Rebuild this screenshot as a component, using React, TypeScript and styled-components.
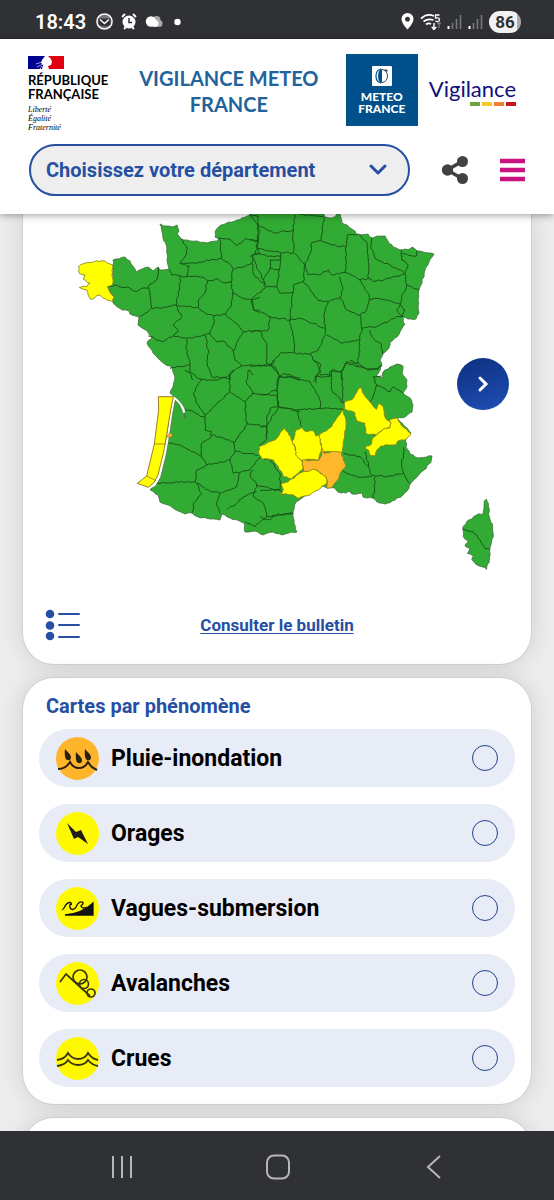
import React from "react";
import styled, { createGlobalStyle } from "styled-components";

const GlobalStyle = createGlobalStyle`
  * { box-sizing: border-box; }
  body { margin: 0; background: #ededed; font-family: Roboto, "Liberation Sans", sans-serif; }
  button, select, input { font: inherit; margin: 0; }
  button { border: 0; padding: 0; background: none; cursor: pointer; }
  svg { display: block; }
`;

const Screen = styled.div`
  display: flex;
  flex-direction: column;
  height: 100vh;
  overflow: hidden;
`;

const StatusBar = styled.div`
  display: flex;
  align-items: center;
  justify-content: space-between;
  flex: none;
  height: 39px;
  padding: 4px 33px 0 35px;
  background: #303135;
  color: #fff;
`;

const StatusGroup = styled.div<{ $gap: number }>`
  display: flex;
  align-items: center;
  gap: ${(p) => p.$gap}px;
`;

const Clock = styled.span`
  font-size: 20px;
  line-height: 24px;
  font-weight: 600;
  margin-right: 2px;
`;

const Battery = styled.span`
  width: 32px;
  height: 22px;
  border-radius: 11px;
  background: linear-gradient(90deg, #f2f2f2 86%, #a9a9ac 86%);
  color: #303135;
  font-size: 17px;
  line-height: 22px;
  font-weight: 700;
  text-align: center;
`;

const Header = styled.header`
  position: relative;
  z-index: 1;
  flex: none;
  height: 175px;
  padding: 15px 28px 0 28px;
  background: #fff;
  box-shadow: 0 1px 8px rgba(0, 0, 0, 0.4);
`;

const BrandRow = styled.div`
  display: flex;
  justify-content: space-between;
  align-items: flex-start;
  height: 90px;
  padding-right: 10px;
`;

const Republic = styled.a`
  display: flex;
  flex-direction: column;
  width: 84px;
  padding-top: 2px;
  color: #000;
  text-decoration: none;
`;

const RepublicName = styled.span`
  margin-top: 4px;
  font-family: Lato, sans-serif;
  font-weight: 700;
  font-size: 13px;
  line-height: 14px;
`;

const Motto = styled.span`
  margin-top: 4px;
  font-family: "Liberation Serif", serif;
  font-style: italic;
  font-size: 8px;
  line-height: 9px;
`;

const Title = styled.h1`
  width: 190px;
  margin: 11px 0 0;
  color: #21639a;
  font-family: Lato, sans-serif;
  font-size: 20px;
  line-height: 26px;
  font-weight: 700;
  text-align: center;
`;

const LogoPair = styled.div`
  display: flex;
  gap: 11px;
`;

const MeteoLogo = styled.a`
  display: flex;
  flex-direction: column;
  align-items: center;
  width: 72px;
  height: 72px;
  padding-top: 12px;
  background: #00508c;
  color: #fff;
  font-family: Lato, sans-serif;
  font-size: 12px;
  line-height: 12px;
  font-weight: 900;
  text-align: center;
  text-decoration: none;
`;

const MeteoName = styled.span`
  margin-top: 5px;
`;

const VigilanceLogo = styled.a`
  display: flex;
  flex-direction: column;
  align-items: flex-end;
  padding-top: 22px;
  color: #10107c;
  font-family: Lato, sans-serif;
  font-size: 22px;
  line-height: 26px;
  text-decoration: none;
`;

const LevelBar = styled.span`
  display: grid;
  grid-template-columns: repeat(4, 10px);
  gap: 2px;
`;

const Level = styled.i<{ $color: string }>`
  height: 4px;
  background: ${(p) => p.$color};
`;

const ToolRow = styled.div`
  display: flex;
  align-items: center;
`;

const SelectBox = styled.label`
  display: grid;
  flex: 1;
  align-items: center;
  margin: 0 30px 0 1px;
  > * { grid-area: 1 / 1; }
  svg { justify-self: end; margin-right: 22px; pointer-events: none; }
`;

const Select = styled.select`
  appearance: none;
  width: 100%;
  height: 52px;
  padding: 0 48px 0 15px;
  border: 2px solid #264fa3;
  border-radius: 26px;
  background: #eee;
  color: #264fa3;
  font-size: 20px;
  font-weight: 700;
`;

const IconButton = styled.button<{ $gap?: number }>`
  display: flex;
  margin-left: ${(p) => p.$gap ?? 0}px;
`;

const Main = styled.main`
  display: flex;
  flex-direction: column;
  gap: 12px;
  flex: 1 1 0;
  min-height: 0;
  padding: 0 22px;
  overflow: hidden;
`;

const Card = styled.section<{ $cut?: boolean }>`
  position: relative;
  flex: none;
  border: 1px solid #d0d0d0;
  border-radius: ${(p) => (p.$cut ? "0 0 32px 32px" : "32px")};
  border-top-width: ${(p) => (p.$cut ? 0 : 1)}px;
  background: #fff;
  box-shadow: 0 0 24px rgba(0, 0, 0, 0.12);
`;

const NextMap = styled.button`
  position: absolute;
  right: 22px;
  top: 144px;
  display: flex;
  align-items: center;
  justify-content: center;
  width: 52px;
  height: 52px;
  border-radius: 50%;
  background: linear-gradient(160deg, #0d2f80, #1f4fb5);
`;

const BulletinRow = styled.div`
  display: grid;
  grid-template-columns: 1fr auto 1fr;
  align-items: center;
  height: 79px;
  padding: 0 22px;
`;

const BulletinLink = styled.a`
  color: #264fa3;
  font-size: 17px;
  line-height: 24px;
  font-weight: 700;
  text-underline-offset: 2px;
`;

const CardTitle = styled.h2`
  margin: 0;
  padding: 16px 23px 11px;
  color: #264fa3;
  font-size: 20px;
  line-height: 24px;
  font-weight: 700;
`;

const PhenomenonList = styled.div`
  display: flex;
  flex-direction: column;
  gap: 17px;
  padding: 0 16px 17px;
`;

const PhenomenonRow = styled.label`
  display: flex;
  align-items: center;
  gap: 12px;
  height: 58px;
  padding: 0 17px;
  border-radius: 29px;
  background: #e8ecf7;
  color: #000;
  font-size: 23px;
  font-weight: 700;
  cursor: pointer;
`;

const Radio = styled.input`
  appearance: none;
  width: 26px;
  height: 26px;
  margin-left: auto !important;
  border: 1px solid #24418f;
  border-radius: 50%;
  &:checked { background: #264fa3; }
`;

const EmptyCard = styled(Card)`
  height: 80px;
`;

const NavBar = styled.nav`
  display: grid;
  grid-template-columns: repeat(3, 1fr);
  align-items: center;
  justify-items: center;
  flex: none;
  height: 69px;
  padding: 2px 42px 0 44px;
  background: #303135;
`;

/* ---------- map of the departments ---------- */

type Pt = [number, number];

const parse = (s: string): Pt[] =>
  s.trim().split(/\s+/).map((p) => p.split(",").map(Number) as Pt);

// Breaks every long segment into short, slightly irregular steps, as a natural border has.
function rough(source: string, step: number, amount: number, closed = false) {
  const pts = parse(source);
  if (closed) pts.push(pts[0]);
  let d = `M${pts[0][0]} ${pts[0][1]}`;
  for (let i = 1; i < pts.length; i++) {
    const [ax, ay] = pts[i - 1];
    const [bx, by] = pts[i];
    const len = Math.hypot(bx - ax, by - ay) || 1;
    const n = Math.max(1, Math.round(len / step));
    for (let k = 1; k <= n; k++) {
      const t = k / n;
      const seed = Math.sin((ax + by) * 12.9 + k * 78.2 + (bx - ay) * 3.1) * 43758.5;
      const off = k === n ? 0 : (seed - Math.floor(seed) - 0.5) * 2 * amount;
      const x = ax + (bx - ax) * t - ((by - ay) / len) * off;
      const y = ay + (by - ay) * t + ((bx - ax) / len) * off;
      d += `L${x.toFixed(1)} ${y.toFixed(1)}`;
    }
  }
  return closed ? d + "Z" : d;
}

const mainland = `160,224 164,226 172,227 177,225 179,231 177,234 181,239 187,240 197,241 207,243 217,241 219,239
215,237 215,232 221,225 237,220 250,215 252,208 323,208 325,217 332,218 340,213 342,223 347,225 355,231 358,235
368,234 372,238 377,236 385,236 388,241 393,247 402,250 410,249 412,247 417,251 423,252 434,254 429,262 425,270
422,283 419,290 418,300 419,313 416,319 408,319 403,317 403,322 405,324 400,332 397,337 390,342 389,348 383,354
380,360 382,365 379,372 376,376 383,378 383,372 390,367 397,364 403,366 402,373 407,380 407,387 403,393 410,398
413,405 412,412 405,417 397,418 402,423 407,428 411,433 406,438 406,447 410,454 418,458 432,456 431,462 424,470
417,477 411,483 409,488 403,495 395,500 385,504 377,502 373,498 363,497 362,493 352,494 349,491 346,493 338,492
335,488 328,488 323,486 310,494 302,498 296,502 293,512 294,523 297,532 292,532 282,535 273,532 263,535 255,531
245,532 244,523 230,518 222,514 220,520 210,519 198,517 192,513 185,514 173,508 160,502 158,495 150,490 157,483
162,472 165,453 167,433 172,405 175,400 180,405 184,413 185,418 185,409 180,402 175,397 170,393 173,387 175,378
173,372 172,368 162,362 153,353 147,343 152,337 146,330 138,325 139,317 130,314 129,311 122,310 113,303 114,297
108,287 112,285 113,265 113,260 125,257 130,261 136,272 142,269 148,267 153,271 158,267 160,270 169,269 167,260
167,248 163,238 162,232`;

const northWest = `332,86 352,115 348,135 330,160 358,168 350,200
330,160 380,160 410,150 440,150 455,145 450,90 446,84
446,84 480,88 500,108 530,86 565,92
455,145 475,158 490,180 545,160 550,135 570,130
540,14 565,50 565,92 558,110 570,130
545,160 555,200 590,225
298,178 305,195 332,198 350,200 400,202 412,212 445,207 460,218 485,215 488,180
332,198 328,240 318,285
412,212 405,250 385,270 385,292
318,285 350,290 385,292 400,305 432,318 465,312 485,285 488,250 482,215
488,250 520,265 545,270 570,262
545,270 550,300 570,310
265,172 262,205 235,230 242,270 245,295 210,320
112,230 135,225 180,235 200,245 215,235 235,235
245,295 290,292 318,285 335,320 310,345 325,360 310,378 275,395 235,378
310,378 350,385 405,375 420,370 432,340 432,318
465,312 500,340 520,365 500,400 490,425 465,395 440,395 418,370
520,365 570,362
490,425 495,450 515,468 570,465
350,385 350,430 360,465 300,475
405,375 415,420 412,460 425,500 480,505
360,465 360,490 370,510
515,468 480,490 480,510`;

const northEast = `0,12 25,20 25,45 70,68 130,60 135,15
25,45 22,115 15,130 0,140
0,90 22,95
135,10 180,16 222,18
22,115 70,125 130,130 130,60
15,130 60,138 92,140 92,130
5,140 40,210 60,175 60,150 92,148
60,175 88,180 92,140
40,210 45,232 80,230 88,180
80,230 90,250 130,248 130,225 160,215 165,165 135,130
222,22 212,92 185,98 180,130 165,165
212,92 245,105 288,110 292,75 325,72
165,165 175,195 205,195 235,180 245,195 285,188 288,150 288,110
325,72 350,95 355,150 355,205 330,210 285,185
365,84 362,110 375,145 420,165 465,190 475,165 455,150 455,120
500,122 500,138 455,130
355,205 370,215 420,205 465,192 470,225 507,240
470,225 455,260 450,285 465,300 458,320
330,210 355,250 358,270 375,265 410,270 450,282
450,285 440,300 458,320
160,215 190,250 205,272 235,275 270,262 280,235 268,200
270,262 290,300 330,315 350,300 358,270
235,275 222,320 225,370 275,400 330,390 335,355 330,315
335,355 380,350 440,320 458,320
360,360 365,380 395,405 398,432
330,390 325,460 345,475 384,478 395,465
130,248 125,270 120,330 60,320 10,295 5,265 45,235
120,330 150,325 190,340 225,355
120,330 130,380 135,430 180,432 205,420 225,375
60,320 55,360 0,365
30,365 50,400 50,460 65,465 90,430 135,425
0,470 65,465 90,500 130,500 150,510
180,432 195,455 210,480 195,500 240,500 240,485 275,485 290,455 325,460
275,485 280,510
195,500 200,520`;

const southWest = `165,0 215,28 255,30 300,15 310,0
215,28 190,70 200,100 225,135
300,15 300,65 225,135
165,120 190,125 225,145 225,135
300,65 345,95 350,165 310,220
355,0 350,40 370,70 345,95
365,70 400,75 440,60 445,20 460,10 510,25
355,0 370,15
440,60 445,110 510,125
350,160 410,170 445,110
410,170 410,205 388,230
225,145 225,180 245,185 240,205 215,220
245,195 310,215 315,245 300,270 230,285 215,260 215,220
112,218 150,225 185,245 215,260
315,245 385,255
300,270 310,310 360,300 390,262
230,285 200,300 195,335 82,340
195,335 235,360 270,370 320,350 330,310
200,340 215,370 190,400 187,428
270,370 260,400 270,430
370,300 360,315 380,345 450,362
380,365 340,380 320,400 290,420
380,345 370,380 400,400 410,440 375,470 345,455
410,440 490,430`;

const southEast = `0,15 45,20 60,50 50,90 55,140 30,145 20,180 20,235
40,0 30,18
0,105 50,105
60,50 100,55 150,65 180,120 180,145
55,140 110,150 180,145 250,148
160,65 180,40 180,10 160,0
180,45 215,45 215,30 245,35 255,10 300,20 330,30 365,20
215,45 215,90 250,130 245,30
270,0 300,20
365,48 340,50 350,75 330,130
350,75 390,95 400,80 428,98
0,200 20,200
110,150 125,200
250,280 300,290 325,320 335,345
316,275 325,320
335,345 380,350 430,340
430,262 430,285 425,310 430,335 448,370
345,350 340,415
240,330 290,350 335,350
0,295 30,298 60,340 60,390 0,392
60,390 68,405
0,470 30,480 40,465 100,460`;

const yellowAreas = [
  "268,88 270,65 290,60 300,45 308,30 316,22 328,45 340,60 352,75 365,88 372,70 384,78 388,105 396,120 408,128 405,143 385,148 365,165 332,160 330,130 305,122 300,98 280,92",
  "405,143 408,128 402,120 428,114 436,130 450,145 468,160 460,170 448,180 430,182 425,193 400,195 378,198 366,210 362,226 345,225 342,212 330,205 335,198 350,192 352,175 365,165 385,148",
  "265,90 270,110 273,145 266,180 260,218 235,218 205,215 195,185 192,165 215,152 230,140 245,115",
  "120,155 140,142 152,155 175,152 182,168 192,165 195,185 200,210 190,242 165,238 140,242 122,225 120,200 112,190 118,170",
  "90,145 102,165 112,185 120,200 122,225 140,242 145,262 130,280 110,297 85,290 70,260 55,240 20,237 12,222 12,200 35,190 60,180 75,160",
  "78,312 100,305 110,297 130,283 145,275 175,265 195,280 213,290 216,308 190,330 165,345 130,355 115,345 85,342 75,345 85,328",
];
const orangeArea =
  "200,205 207,220 235,215 260,218 265,240 273,258 258,275 248,300 232,322 216,325 218,305 213,290 180,268 165,272 145,275 145,262 142,240 165,242 190,242 200,225";
const finistere =
  "25,170 50,158 95,152 120,162 128,165 127,225 112,230 118,245 132,262 128,275 100,265 88,255 62,268 50,240 28,232 50,230 60,220 40,208 45,195 28,190";
const corsica =
  "163,482 170,478 175,490 178,530 188,560 190,590 180,625 178,660 170,688 155,680 135,670 125,658 130,648 112,640 120,625 105,618 115,605 100,590 98,565 110,545 140,525 160,520";

const GREEN = "#32ab34";
const YELLOW = "#ffff00";
const ORANGE = "#ffb72b";
const third = (x: number, y: number) => `translate(${x} ${y}) scale(0.33333)`;

function Borders({ lines, x, y }: { lines: string; x: number; y: number }) {
  return (
    <g transform={third(x, y)} fill="none" stroke="#175217" strokeWidth={2.9} strokeLinejoin="round">
      {lines.split("\n").map((l) => (
        <path key={l} d={rough(l, 8, 2.6)} />
      ))}
    </g>
  );
}

function FranceMap() {
  return (
    <svg viewBox="23 214 508 371" width="100%" role="img" aria-label="Carte de vigilance">
      <path d={rough(mainland, 3, 0.7, true)} fill={GREEN} stroke="#40703a" strokeWidth={0.8} />
      <Borders lines={northWest} x={70} y={210} />
      <Borders lines={northEast} x={250} y={210} />
      <Borders lines={southWest} x={130} y={370} />
      <Borders lines={southEast} x={260} y={360} />
      <g transform={third(70, 210)} stroke="#7d7a1c" strokeWidth={2.4}>
        <path d={rough(finistere, 8, 2.5, true)} fill={YELLOW} />
      </g>
      <g transform={third(255, 380)} stroke="#8a7d18" strokeWidth={2.4} strokeLinejoin="round">
        {yellowAreas.map((a) => (
          <path key={a} d={rough(a, 8, 2.2, true)} fill={YELLOW} />
        ))}
        <path d={rough(orangeArea, 8, 2.2, true)} fill={ORANGE} />
      </g>
      <g transform={third(130, 370)} strokeLinejoin="round">
        <path d="M133 82L124 130L114 200L104 255L88 320L74 345L55 355" fill="none" stroke="#fff" strokeWidth={7} />
        <path d="M137 88L128 130L118 200L108 257L92 322L78 347L60 358" fill="none" stroke="#5c6b55" strokeWidth={1.5} />
        <path d="M85 80H130L122 120L110 195L100 250L84 315L72 338L55 352L22 340L50 318L73 222L86 120Z" fill={YELLOW} stroke="#8a6a18" strokeWidth={2.6} />
        <path d="M73 222H104M50 318L78 332" fill="none" stroke="#a8741c" strokeWidth={2.6} />
        <path d="M110 200L120 189L129 194L122 202Z" fill={ORANGE} stroke="#8a6a18" strokeWidth={2} />
        <path d="M133 84Q155 98 163 130" fill="none" stroke="#fff" strokeWidth={6} />
        <path d="M162 128L167 146" stroke="#55705a" strokeWidth={4} />
      </g>
      <g transform={third(430, 340)}>
        <path d={rough(corsica, 8, 2, true)} fill={GREEN} stroke="#40703a" strokeWidth={2.4} />
        <path d={rough("98,568 130,575 150,600 165,625 180,628", 8, 2)} fill="none" stroke="#175217" strokeWidth={2.8} />
      </g>
    </svg>
  );
}

/* ---------- phenomenon pictograms ---------- */

const drop = "c2 3 6 5 6 8.500c0 3.500-4.500 3.500-5.600 .5c-.8-3-.8-6-.4-9z";

const pictograms: Record<string, React.ReactNode> = {
  rain: (
    <g>
      <g fill="#2b2112">
        <path d={"M9 12" + drop} />
        <path d={"M20 15" + drop} />
        <path d={"M29 12" + drop} />
      </g>
      <path d="M2 32C7 32 11 30 14 25C18 33 28 33 32 25C35 30 37 31 41 33" fill="none" stroke="#2b2112" strokeWidth={2} />
    </g>
  ),
  storm: <path d="M11 11L20 20L25 18L32 32L22 25L18 27Z" fill="#1d1d10" />,
  waves: (
    <g fill="none" stroke="#111" strokeWidth={1.3}>
      <path d="M6 23C9 22 9 15 14 15.500C16 16 16 18 14 17.500C13 23 18 24 20 20C22 15 25 14 27 15.500C28 18 25 17.500 25 19C26 22 29 21 31 20" />
      <path d="M9 28C20 27 29 24 37 16V28Z" fill="#111" />
    </g>
  ),
  avalanche: (
    <g fill="none" stroke="#3a3510" strokeWidth={1.7}>
      <path d="M4 20L10 12L34 34" />
      <circle cx={24} cy={15} r={7} />
      <circle cx={28} cy={22} r={4.5} />
      <circle cx={35} cy={31} r={4} />
    </g>
  ),
  flood: (
    <g fill="none" stroke="#3a3510" strokeWidth={1.8}>
      <path d="M1 23Q9 22 12 16Q16 22 22 22Q29 22 32 16Q36 22 42 23" />
      <path d="M1 29Q9 28 12 23Q16 28 22 28Q29 28 32 23Q36 28 42 29" />
    </g>
  ),
};

function Pictogram({ name, color }: { name: string; color: string }) {
  return (
    <svg width={43} height={43} viewBox="0 0 43 43" aria-hidden="true">
      <circle cx={21.5} cy={21.5} r={21.5} fill={color} />
      {pictograms[name]}
    </svg>
  );
}

const phenomena = [
  { label: "Pluie-inondation", icon: "rain", color: "#ffb52b" },
  { label: "Orages", icon: "storm", color: "#fff900" },
  { label: "Vagues-submersion", icon: "waves", color: "#fff900" },
  { label: "Avalanches", icon: "avalanche", color: "#fff900" },
  { label: "Crues", icon: "flood", color: "#fff900" },
];

/* ---------- status bar drawings ---------- */

function Signal() {
  return (
    <svg width={15} height={16} viewBox="0 0 15 16">
      <path d="M1.5 12v3" stroke="#fff" strokeWidth={2} />
      <path d="M5.5 9v6M9.5 5v10M13.5 1v14" stroke="#77787b" strokeWidth={1.6} />
    </svg>
  );
}

function PhoneStatus() {
  return (
    <StatusBar>
      <StatusGroup $gap={8}>
        <Clock>18:43</Clock>
        <svg width={17} height={17} viewBox="0 0 17 17">
          <circle cx={8.5} cy={8.5} r={7.6} fill="#77787b" stroke="#f4f4f4" strokeWidth={1.5} />
          <path d="M2.5 5.5h12v6q-6 4-12 0z" fill="#303135" />
          <path d="M4 6.5l4.5 4L13 6.5" fill="none" stroke="#fff" strokeWidth={1.4} />
        </svg>
        <svg width={16} height={17} viewBox="0 0 16 17">
          <circle cx={8} cy={9} r={6.5} fill="#fff" />
          <path d="M1 4l3-3M15 4l-3-3M3 16l2-2M13 16l-2-2" stroke="#fff" strokeWidth={1.8} />
          <path d="M8 5v4.5h3" fill="none" stroke="#303135" strokeWidth={1.5} />
        </svg>
        <svg width={18} height={13} viewBox="0 0 18 13">
          <circle cx={11.5} cy={5} r={4} fill="#a9a9ac" />
          <circle cx={14} cy={8.5} r={3.500} fill="#a9a9ac" />
          <circle cx={6} cy={6.5} r={5.200} fill="#fff" />
          <circle cx={10} cy={8.500} r={3.500} fill="#fff" />
        </svg>
        <svg width={24} height={8} viewBox="0 0 24 8">
          <circle cx={6.500} cy={4} r={3.2} fill="#fff" />
        </svg>
      </StatusGroup>
      <StatusGroup $gap={6}>
        <svg width={13} height={17} viewBox="0 0 13 17">
          <path d="M6.5 0a6 6 0 0 1 6 6.2c0 4-6 10.3-6 10.3s-6-6.300-6-10.300A6 6 0 0 1 6.500 0zm0 3.800a2.400 2.400 0 1 0 .01 0z" fill="#fff" fillRule="evenodd" />
        </svg>
        <svg width={21} height={18} viewBox="1 0 21 18">
          <path d="M2 5.500Q8 0 15 3M4.500 8.500Q9 5 14.500 7M7 11.500Q9.500 9.500 12 11" fill="none" stroke="#fff" strokeWidth={1.700} />
          <path d="M20.500 2h-4v3q4-.8 4 1.700t-4.200 1.500" fill="none" stroke="#fff" strokeWidth={1.300} />
          <path d="M15 10v6M12.800 14l2.200 2.500 2.200-2.500" fill="none" stroke="#fff" strokeWidth={1.400} />
          <path d="M20 15V9M18.200 11l1.800-2 1.800 2" fill="none" stroke="#77787b" strokeWidth={1.300} />
        </svg>
        <Signal />
        <Signal />
        <Battery>86</Battery>
      </StatusGroup>
    </StatusBar>
  );
}

function SiteHeader() {
  return (
    <Header>
      <BrandRow>
        <Republic href="#republique">
          <svg width={36} height={13} viewBox="0 0 36 13" aria-hidden="true">
            <path d="M0 0h17l-3 4-1 3 2 2-1 4H0z" fill="#000091" />
            <path d="M36 0H20l3 3 1 3-1 3-3 1 1 3h15z" fill="#e1000f" />
            <path d="M8 8l6-2M9 11l6-3M12 13l2-3" stroke="#c9cbe6" strokeWidth={0.8} />
          </svg>
          <RepublicName>RÉPUBLIQUE<br />FRANÇAISE</RepublicName>
          <Motto>Liberté<br />Égalité<br />Fraternité</Motto>
        </Republic>
        <Title>VIGILANCE METEO FRANCE</Title>
        <LogoPair>
          <MeteoLogo href="#meteo-france">
            <svg width={20} height={20} viewBox="0 0 20 20" aria-hidden="true">
              <rect width={20} height={20} rx={1} fill="#fff" />
              <path d="M10 3a4 7 0 0 0 0 14z" fill="#00508c" />
              <path d="M10 3.500q5 .5 5.500 6.500-.5 6-5.500 6.500M12 4l4 1M14 3v3" fill="none" stroke="#3b4a5c" strokeWidth={1} />
              <path d="M9 3a7 7 0 0 0-5 7 7 7 0 0 0 5 7" fill="none" stroke="#00508c" strokeWidth={1.200} />
            </svg>
            <MeteoName>METEO<br />FRANCE</MeteoName>
          </MeteoLogo>
          <VigilanceLogo href="#vigilance">
            Vigilance
            <LevelBar>
              <Level $color="#6fa23c" />
              <Level $color="#f7c92a" />
              <Level $color="#f08033" />
              <Level $color="#c9141c" />
            </LevelBar>
          </VigilanceLogo>
        </LogoPair>
      </BrandRow>
      <ToolRow>
        <SelectBox>
          <Select aria-label="Choisissez votre département" defaultValue="">
            <option value="">Choisissez votre département</option>
            <option value="30">Gard</option>
          </Select>
          <svg width={20} height={12} viewBox="0 0 20 12" aria-hidden="true">
            <path d="M3 2l7 7 7-7" fill="none" stroke="#264fa3" strokeWidth={3} strokeLinecap="round" strokeLinejoin="round" />
          </svg>
        </SelectBox>
        <IconButton aria-label="Partager">
          <svg width={30} height={30} viewBox="0 0 30 30">
            <path d="M23 6L7 15L23 24" fill="none" stroke="#424242" strokeWidth={3.500} />
            <circle cx={22.500} cy={6.500} r={5.500} fill="#424242" />
            <circle cx={7.500} cy={15} r={5.700} fill="#424242" />
            <circle cx={22.500} cy={23.500} r={5.500} fill="#424242" />
          </svg>
        </IconButton>
        <IconButton $gap={30} aria-label="Menu">
          <svg width={26} height={24} viewBox="0 0 26 24">
            <path d="M0 3h25M0 12h25M0 21h25" stroke="#c7127f" strokeWidth={4.500} />
          </svg>
        </IconButton>
      </ToolRow>
    </Header>
  );
}

export default function App() {
  return (
    <Screen>
      <GlobalStyle />
      <PhoneStatus />
      <SiteHeader />
      <Main>
        <Card $cut>
          <FranceMap />
          <NextMap aria-label="Carte suivante">
            <svg width={14} height={20} viewBox="0 0 14 20">
              <path d="M4 4l6 6-6 6" fill="none" stroke="#fff" strokeWidth={3} strokeLinecap="round" />
            </svg>
          </NextMap>
          <BulletinRow>
            <IconButton aria-label="Légende">
              <svg width={36} height={32} viewBox="0 0 36 32">
                <g fill="#264fa3">
                  <circle cx={5} cy={5} r={4.300} />
                  <circle cx={5} cy={16.500} r={4.300} />
                  <circle cx={5} cy={27} r={4.300} />
                </g>
                <path d="M14 5h20M14 16h20M14 28h20" stroke="#264fa3" strokeWidth={2} strokeLinecap="round" />
              </svg>
            </IconButton>
            <BulletinLink href="#bulletin">Consulter le bulletin</BulletinLink>
          </BulletinRow>
        </Card>
        <Card>
          <CardTitle>Cartes par phénomène</CardTitle>
          <PhenomenonList>
            {phenomena.map((p) => (
              <PhenomenonRow key={p.label}>
                <Pictogram name={p.icon} color={p.color} />
                {p.label}
                <Radio type="radio" name="phenomenon" value={p.icon} />
              </PhenomenonRow>
            ))}
          </PhenomenonList>
        </Card>
        <EmptyCard />
      </Main>
      <NavBar>
        <IconButton aria-label="Applications récentes">
          <svg width={22} height={24} viewBox="0 0 22 24">
            <path d="M2 1v22M11 1v22M20 1v22" stroke="#b5b6b9" strokeWidth={2} />
          </svg>
        </IconButton>
        <IconButton aria-label="Accueil">
          <svg width={24} height={26} viewBox="0 0 24 26">
            <rect x={1} y={1.500} width={22} height={23} rx={7} fill="none" stroke="#b5b6b9" strokeWidth={2} />
          </svg>
        </IconButton>
        <IconButton aria-label="Retour">
          <svg width={16} height={26} viewBox="0 0 16 26">
            <path d="M14 2L2 13l12 11" fill="none" stroke="#b5b6b9" strokeWidth={2} />
          </svg>
        </IconButton>
      </NavBar>
    </Screen>
  );
}
